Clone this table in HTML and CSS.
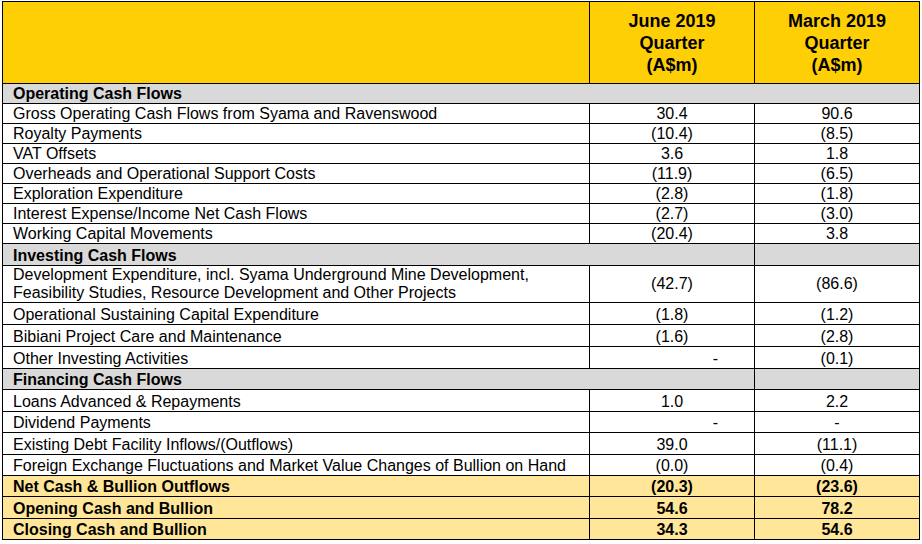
FILE: index.html
```html
<!DOCTYPE html>
<html>
<head>
<meta charset="utf-8">
<link rel="stylesheet" href="styles.css">
</head>
<body>
<table class="cf">
  <colgroup><col class="c-label"><col class="c-num"><col class="c-num"></colgroup>
  <thead>
    <tr class="head">
      <th></th>
      <th>June 2019<br>Quarter<br>(A$m)</th>
      <th>March 2019<br>Quarter<br>(A$m)</th>
    </tr>
  </thead>
  <tbody class="sec-a">
    <tr class="sec"><td colspan="3">Operating Cash Flows</td></tr>
    <tr><td>Gross Operating Cash Flows from Syama and Ravenswood</td><td>30.4</td><td>90.6</td></tr>
    <tr><td>Royalty Payments</td><td>(10.4)</td><td>(8.5)</td></tr>
    <tr><td>VAT Offsets</td><td>3.6</td><td>1.8</td></tr>
    <tr><td>Overheads and Operational Support Costs</td><td>(11.9)</td><td>(6.5)</td></tr>
    <tr><td>Exploration Expenditure</td><td>(2.8)</td><td>(1.8)</td></tr>
    <tr><td>Interest Expense/Income Net Cash Flows</td><td>(2.7)</td><td>(3.0)</td></tr>
    <tr><td>Working Capital Movements</td><td>(20.4)</td><td>3.8</td></tr>
  </tbody>
  <tbody class="sec-b">
    <tr class="sec"><td colspan="2">Investing Cash Flows</td><td></td></tr>
    <tr class="two"><td>Development Expenditure, incl. Syama Underground Mine Development,<br>Feasibility Studies, Resource Development and Other Projects</td><td>(42.7)</td><td>(86.6)</td></tr>
    <tr><td>Operational Sustaining Capital Expenditure</td><td>(1.8)</td><td>(1.2)</td></tr>
    <tr><td>Bibiani Project Care and Maintenance</td><td>(1.6)</td><td>(2.8)</td></tr>
    <tr><td>Other Investing Activities</td><td class="dash">-</td><td>(0.1)</td></tr>
  </tbody>
  <tbody class="sec-c">
    <tr class="sec"><td colspan="2">Financing Cash Flows</td><td></td></tr>
    <tr><td>Loans Advanced &amp; Repayments</td><td>1.0</td><td>2.2</td></tr>
    <tr><td>Dividend Payments</td><td class="dash">-</td><td>-</td></tr>
    <tr><td>Existing Debt Facility Inflows/(Outflows)</td><td>39.0</td><td>(11.1)</td></tr>
    <tr><td>Foreign Exchange Fluctuations and Market Value Changes of Bullion on Hand</td><td>(0.0)</td><td>(0.4)</td></tr>
    <tr class="tot"><td>Net Cash &amp; Bullion Outflows</td><td>(20.3)</td><td>(23.6)</td></tr>
    <tr class="tot"><td>Opening Cash and Bullion</td><td>54.6</td><td>78.2</td></tr>
    <tr class="tot"><td>Closing Cash and Bullion</td><td>34.3</td><td>54.6</td></tr>
  </tbody>
</table>
</body>
</html>
```
FILE: styles.css
```css
html, body {
  margin: 0;
  padding: 0;
  background: #ffffff;
}
body {
  padding: 1px 2px;
  font-family: "Liberation Sans", Arial, sans-serif;
  color: #000;
}
.cf {
  border-collapse: collapse;
  table-layout: fixed;
  width: 918px;
  font-size: 16px;
}
.c-label { width: 587px; }
.c-num { width: 165px; }
.cf td, .cf th {
  border: 1px solid #000;
  padding: 0 10px;
  line-height: 18px;
  height: 19px;
  vertical-align: bottom;
  text-align: center;
  white-space: nowrap;
}
.cf td:first-child {
  text-align: left;
}
.head th {
  background: #ffcf06;
  height: 81px;
  font-size: 18px;
  line-height: 22px;
  font-weight: bold;
  vertical-align: middle;
  padding-top: 0;
}
.sec td {
  background: #d9d9d9;
  font-weight: bold;
}
.sec-b td { height: 21px; }
.sec-c td { height: 20.4px; }
.two td {
  height: 36px;
  line-height: 18px;
  vertical-align: middle;
}
.cf td.dash {
  text-align: right;
  padding-right: 36px;
}
.tot td {
  background: #ffe699;
  font-weight: bold;
}
```
